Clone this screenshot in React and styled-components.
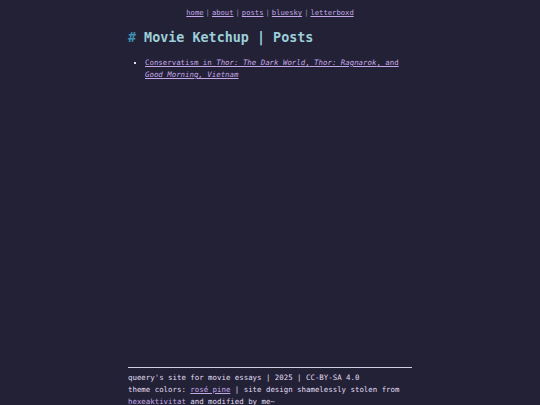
import styled, { createGlobalStyle } from "styled-components";

const GlobalStyle = createGlobalStyle`
  html, body {
    margin: 0;
    padding: 0;
    background: #232136;
  }
  body {
    font-family: "DejaVu Sans Mono", "Liberation Mono", monospace;
    color: #e0def4;
  }
`;

const NAV_LINKS = ["home", "about", "posts", "bluesky", "letterboxd"];

const App = () => (
  <>
    <GlobalStyle />
    <Page>
      <Main>
        <Nav>
          {NAV_LINKS.map((label, i) => (
            <NavItem key={label}>
              {i > 0 && <Sep>|</Sep>}
              <Link href="#">{label}</Link>
            </NavItem>
          ))}
        </Nav>
        <Title>
          <Hash>#</Hash> Movie Ketchup | Posts
        </Title>
        <PostList>
          <li>
            <Link href="#">
              Conservatism in <em>Thor: The Dark World</em>,{" "}
              <em>Thor: Ragnarok</em>, and <em>Good Morning, Vietnam</em>
            </Link>
          </li>
        </PostList>
      </Main>
      <Footer>
        <div>queery's site for movie essays | 2025 | CC-BY-SA 4.0</div>
        <div>
          theme colors: <Link href="#">rosé pine</Link> | site design
          shamelessly stolen from <PlainLink href="#">hexeaktivitat</PlainLink>{" "}
          and modified by me~
        </div>
      </Footer>
    </Page>
  </>
);

export default App;

const Page = styled.div`
  width: 284px;
  margin: 0 auto;
`;

const Main = styled.main`
  min-height: calc(100vh - 38px);
`;

const Nav = styled.nav`
  display: flex;
  justify-content: center;
  padding-top: 8px;
  font-size: 7.2px;
  line-height: 10px;
`;

const NavItem = styled.span`
  display: inline-flex;
`;

const Sep = styled.span`
  color: #908caa;
  margin: 0 2px;
`;

const Link = styled.a`
  color: #c4a7e7;
  text-decoration: underline;

  em {
    font-style: italic;
  }
`;

const PlainLink = styled.a`
  color: #c4a7e7;
  text-decoration: none;
`;

const Title = styled.h1`
  margin: 12px 0 0;
  font-size: 13.4px;
  line-height: 16px;
  font-weight: bold;
  color: #9ccfd8;
`;

const Hash = styled.span`
  color: #3e8fb0;
`;

const PostList = styled.ul`
  margin: 11px 0 0;
  padding-left: 17px;
  list-style: square;
  font-size: 7.4px;
  line-height: 12px;

  li::marker {
    color: #e0def4;
  }
`;

const Footer = styled.footer`
  border-top: 1px solid #cfcde2;
  padding-top: 4px;
  font-size: 7.4px;
  line-height: 12px;
  color: #e0def4;
`;
